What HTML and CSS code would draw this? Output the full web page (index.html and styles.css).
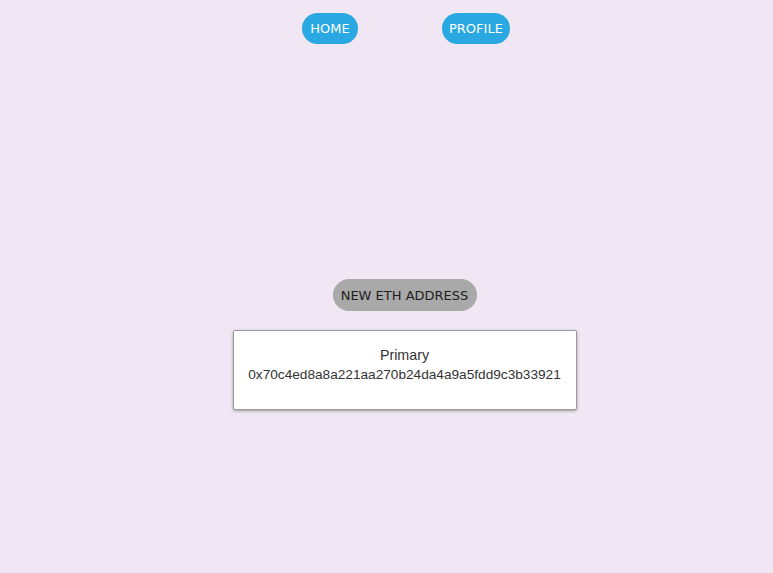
FILE: index.html
```html
<!DOCTYPE html>
<html>
<head>
<meta charset="utf-8">
<link rel="stylesheet" href="styles.css">
</head>
<body>
<nav class="nav">
  <a class="pill pill-blue pill-home">HOME</a>
  <a class="pill pill-blue">PROFILE</a>
</nav>
<main class="main">
  <button class="pill pill-grey">NEW ETH ADDRESS</button>
  <div class="card">
    <div class="card-title">Primary</div>
    <div class="card-addr">0x70c4ed8a8a221aa270b24da4a9a5fdd9c3b33921</div>
  </div>
</main>
</body>
</html>
```
FILE: styles.css
```css
html, body {
  margin: 0;
  padding: 0;
}
body {
  background: #f1e6f3;
  width: 773px;
  height: 573px;
  overflow: hidden;
  font-family: "Liberation Sans", Arial, sans-serif;
}
.nav {
  display: flex;
  justify-content: flex-start;
  gap: 84px;
  padding: 13px 0 0 302px;
}
.pill {
  display: inline-flex;
  align-items: center;
  justify-content: center;
  height: 31px;
  padding: 0 7px;
  border-radius: 16px;
  font-family: "DejaVu Sans", sans-serif;
  font-size: 13px;
  box-sizing: border-box;
  border: none;
}
.pill-home {
  width: 56px;
}
.pill-blue {
  background: #29a8e1;
  color: #ffffff;
}
.main {
  display: flex;
  flex-direction: column;
  align-items: center;
  margin-left: 36px;
  padding-top: 235px;
}
.pill-grey {
  background: #a9a9a9;
  color: #1e1e1e;
  height: 32px;
  width: 144px;
  padding: 0;
}
.card {
  margin-top: 19px;
  width: 344px;
  height: 80px;
  box-sizing: border-box;
  background: #ffffff;
  border: 1px solid #9a9a9a;
  border-radius: 2px;
  box-shadow: 0 1px 3px rgba(0,0,0,0.35);
  text-align: center;
  color: #333333;
  padding-top: 15px;
}
.card-title {
  font-size: 14.3px;
  line-height: 18px;
  margin-bottom: 2px;
}
.card-addr {
  font-size: 13.65px;
  line-height: 18px;
}
```
